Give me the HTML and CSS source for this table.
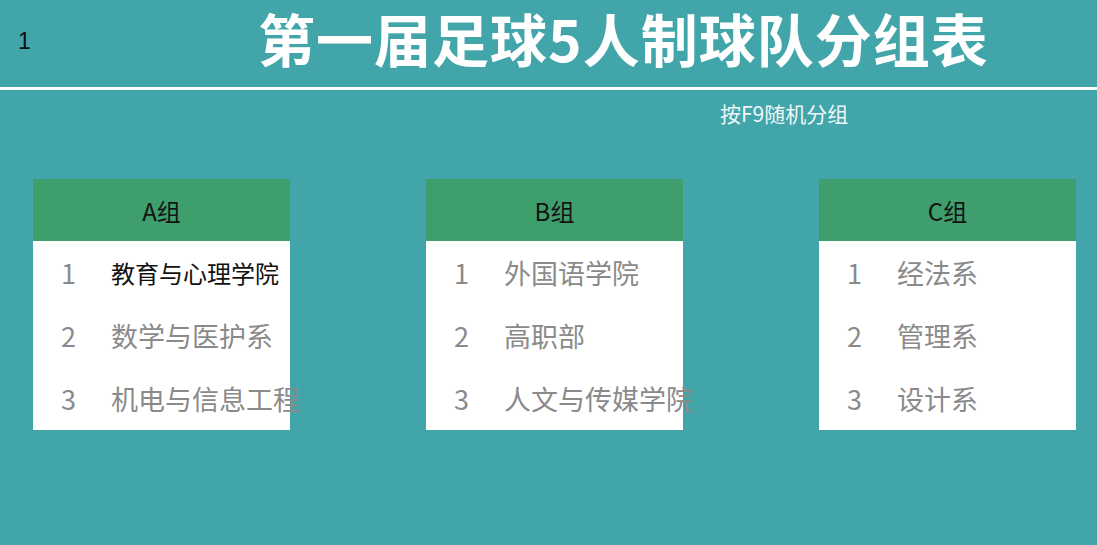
FILE: index.html
```html
<!DOCTYPE html>
<html lang="zh">
<head>
<meta charset="utf-8">
<link rel="stylesheet" href="styles.css">
</head>
<body>
<div class="page">
  <header class="top">
    <div class="slide-num">1</div>
    <h1 class="title">第一届足球5人制球队分组表</h1>
  </header>
  <div class="rule"></div>
  <div class="hint">按F9随机分组</div>
  <div class="groups">
    <section class="card">
      <div class="card-head">A组</div>
      <div class="card-body">
        <div class="row active"><span class="idx">1</span><span class="name">教育与心理学院</span></div>
        <div class="row"><span class="idx">2</span><span class="name">数学与医护系</span></div>
        <div class="row"><span class="idx">3</span><span class="name">机电与信息工程</span></div>
      </div>
    </section>
    <section class="card">
      <div class="card-head">B组</div>
      <div class="card-body">
        <div class="row"><span class="idx">1</span><span class="name">外国语学院</span></div>
        <div class="row"><span class="idx">2</span><span class="name">高职部</span></div>
        <div class="row"><span class="idx">3</span><span class="name">人文与传媒学院</span></div>
      </div>
    </section>
    <section class="card">
      <div class="card-head">C组</div>
      <div class="card-body">
        <div class="row"><span class="idx">1</span><span class="name">经法系</span></div>
        <div class="row"><span class="idx">2</span><span class="name">管理系</span></div>
        <div class="row"><span class="idx">3</span><span class="name">设计系</span></div>
      </div>
    </section>
  </div>
</div>
</body>
</html>
```
FILE: styles.css
```css
html, body {
  margin: 0;
  padding: 0;
}
body {
  background: #41a5aa;
  font-family: "Noto Sans CJK SC", "Noto Sans", sans-serif;
  width: 1097px;
  height: 545px;
  overflow: hidden;
}
.page {
  display: flex;
  flex-direction: column;
}
.top {
  height: 87px;
  display: flex;
  align-items: flex-start;
}
.slide-num {
  padding-left: 18px;
  padding-top: 26px;
  font-family: "Liberation Sans", "Noto Sans", sans-serif;
  font-size: 23px;
  line-height: 30px;
  color: #111;
  box-sizing: border-box;
  flex: none;
  width: 258px;
}
.title {
  flex: none;
  margin: 0;
  padding: 0 4px 0 0;
  font-size: 57px;
  line-height: 74px;
  font-weight: 700;
  color: #ffffff;
  letter-spacing: 1px;
  white-space: nowrap;
}
.rule {
  height: 3px;
  background: #ffffff;
}
.hint {
  margin-top: 9px;
  padding-left: 720px;
  font-size: 21px;
  line-height: 28px;
  color: #eef7f7;
}
.groups {
  display: flex;
  gap: 136px;
  padding-left: 33px;
  margin-top: 52px;
}
.card {
  width: 257px;
  flex: none;
}
.card-head {
  height: 62px;
  background: #3e9f6d;
  display: flex;
  align-items: center;
  justify-content: center;
  font-size: 24px;
  color: #141414;
}
.card-body {
  background: #ffffff;
}
.row {
  height: 63px;
  display: flex;
  align-items: center;
  white-space: nowrap;
  color: #8a8a8a;
  font-size: 27px;
}
.idx {
  width: 50px;
  padding-left: 28px;
  flex: none;
}
.name {
  flex: none;
}
.row.active .name {
  color: #111111;
  font-size: 24px;
}
```
